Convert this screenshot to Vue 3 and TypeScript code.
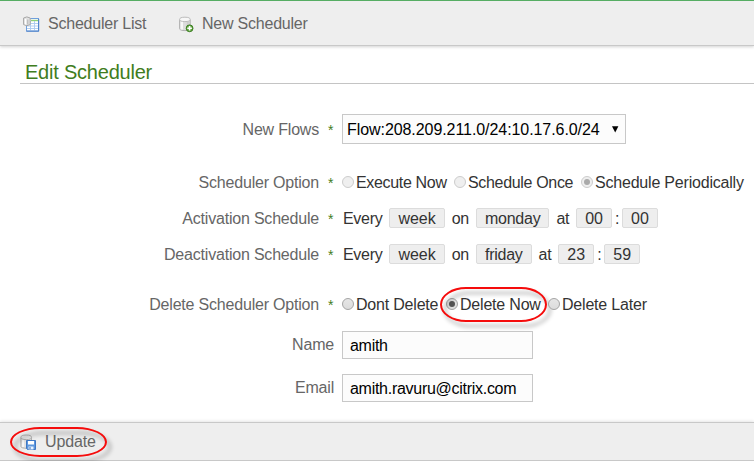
<script setup lang="ts">
import { ref } from 'vue'

interface Schedule {
  label: string
  period: string
  day: string
  hour: string
  minute: string
}

const scheduleOptions = ['Execute Now', 'Schedule Once', 'Schedule Periodically']
const deleteOptions = ['Dont Delete', 'Delete Now', 'Delete Later']
const scheduleChoice = 'Schedule Periodically'
const deleteChoice = ref('Delete Now')
const name = ref('amith')
const email = ref('amith.ravuru@citrix.com')

const schedules: Schedule[] = [
  { label: 'Activation Schedule', period: 'week', day: 'monday', hour: '00', minute: '00' },
  { label: 'Deactivation Schedule', period: 'week', day: 'friday', hour: '23', minute: '59' },
]
</script>

<template>
  <div class="page">
    <header class="toolbar">
      <a class="tool tool-list">
        <svg class="icon" width="17" height="17" viewBox="0 0 17 17">
          <rect x="3.5" y="2.5" width="12" height="12.5" fill="#fff" stroke="#6f9fdd" />
          <path d="M8 4.5h7" stroke="#8ed077" stroke-width="1.4" />
          <path d="M4 7.5h11M4 10h11M4 12.5h11M7.5 5v10M11.5 5v10" stroke="#a9caf0" stroke-width=".9" />
          <path d="M3.5 15.2h12.2V3" fill="none" stroke="#4b7fc9" />
          <path d="M.6 2Q3.8-.2 7.2 2V8.6Q3.8 10.8.6 8.6Z" fill="#e3e3e3" stroke="#a6a6a6" />
          <path d="M2.5 3v5.5" stroke="#fff" stroke-width="1.4" />
          <path d="M4.8 3.5v5" stroke="#b0b0b0" />
        </svg>
        <span>Scheduler List</span>
      </a>
      <a class="tool">
        <svg class="icon" width="16" height="17" viewBox="0 0 16 17">
          <path d="M.6 3.6v9.2c0 2.4 10.6 2.4 10.6 0V3.6" fill="#dcdcdc" stroke="#b0b0b0" />
          <path d="M2.8 5v8.5" stroke="#f8f8f8" stroke-width="2.4" />
          <path d="M8.8 5v8" stroke="#cdcdcd" stroke-width="2" />
          <ellipse cx="5.9" cy="3.4" rx="5.3" ry="2.2" fill="#f7f7f7" stroke="#bcbcbc" />
          <circle cx="10.6" cy="12.3" r="3.4" fill="#5da63a" stroke="#3d7d24" />
          <path d="M10.6 10v4.6M8.3 12.3h4.6" stroke="#fff" stroke-width="1.6" />
        </svg>
        <span>New Scheduler</span>
      </a>
    </header>

    <main class="content">
      <h1 class="title">Edit Scheduler</h1>
      <form class="form" @submit.prevent>
        <div class="row row-flow">
          <label class="label">New Flows<b class="star">*</b></label>
          <div class="select">
            <span>Flow:208.209.211.0/24:10.17.6.0/24</span>
            <svg width="7" height="7" viewBox="0 0 7 7"><path d="M0 .3h6.4L3.2 6.5Z" fill="#000" /></svg>
          </div>
        </div>

        <div class="row">
          <label class="label">Scheduler Option<b class="star">*</b></label>
          <div class="radios radios-schedule">
            <span v-for="option in scheduleOptions" :key="option" class="choice">
              <i class="radio disabled" :class="{ checked: option === scheduleChoice }"></i>{{ option }}
            </span>
          </div>
        </div>

        <div v-for="item in schedules" :key="item.label" class="row">
          <label class="label">{{ item.label }}<b class="star">*</b></label>
          <div class="schedule">
            <span class="word">Every</span>
            <span class="chip">{{ item.period }}</span>
            <span class="word">on</span>
            <span class="chip chip-day">{{ item.day }}</span>
            <span class="word">at</span>
            <span class="time">
              <span class="chip">{{ item.hour }}</span>
              <span class="word">:</span>
              <span class="chip">{{ item.minute }}</span>
            </span>
          </div>
        </div>

        <div class="row row-delete">
          <label class="label">Delete Scheduler Option<b class="star">*</b></label>
          <div class="radios radios-delete">
            <span v-for="option in deleteOptions" :key="option" class="choice" @click="deleteChoice = option">
              <i class="radio" :class="{ checked: option === deleteChoice }"></i>{{ option }}
              <i v-if="option === 'Delete Now'" class="ring ring-delete"></i>
            </span>
          </div>
        </div>

        <div class="row row-name">
          <label class="label">Name</label>
          <input v-model="name" class="input" type="text" />
        </div>
        <div class="row row-email">
          <label class="label">Email</label>
          <input v-model="email" class="input" type="text" />
        </div>
      </form>
    </main>

    <footer class="footer">
      <a class="update">
        <svg class="icon" width="17" height="17" viewBox="0 0 17 17">
          <path d="M.9 3.6v9c0 2.2 10.6 2.2 10.6 0v-9" fill="#e2e2e2" stroke="#b0b0b0" />
          <path d="M3 5v8" stroke="#f6f6f6" stroke-width="2" />
          <ellipse cx="6.2" cy="3.3" rx="5.3" ry="2.3" fill="#e9e9e9" stroke="#b0b0b0" />
          <path d="M6.5 6.5h9v9h-8l-1-1Z" fill="#5d97de" stroke="#3f78c4" />
          <path d="M8 7h6v3.5H8Z" fill="#fff" />
          <path d="M8.5 12.5h5v3h-5Z" fill="#e9f3ff" />
          <path d="M10 13v2.2" stroke="#346fbd" />
        </svg>
        <span>Update</span>
        <i class="ring ring-update"></i>
      </a>
    </footer>
  </div>
</template>

<style>
body {
  margin: 0;
  background: #fff;
}
</style>

<style scoped>
.page {
  box-sizing: border-box;
  display: flex;
  flex-direction: column;
  width: 754px;
  height: 461px;
  overflow: hidden;
  font: 16px/20px "Liberation Sans", Arial, sans-serif;
  color: #333;
  white-space: nowrap;
}

.toolbar {
  box-sizing: border-box;
  display: flex;
  flex: none;
  height: 46px;
  padding: 13px 0 0 23px;
  border-top: 1px solid #55ad63;
  border-bottom: 1px solid #c8c8c8;
  background: #eee;
  box-shadow: 0 1px 3px rgba(0, 0, 0, 0.18);
}

.tool,
.update {
  position: relative;
  display: flex;
  height: 20px;
  color: #666;
}

.tool {
  gap: 7px;
  letter-spacing: -0.22px;
}

.tool-list {
  width: 156px;
  gap: 8px;
}

.icon {
  flex: none;
  margin-top: 2px;
}

.content {
  flex: 1;
  min-height: 0;
}

.title {
  box-sizing: border-box;
  height: 24px;
  margin: 14px 0 0 20px;
  padding-left: 5px;
  border-bottom: 1px solid #c4c4c4;
  font-size: 20px;
  line-height: 24px;
  font-weight: normal;
  letter-spacing: -0.22px;
  color: #3f7d20;
}

.row {
  display: flex;
  align-items: center;
  height: 36px;
}

.row-flow {
  margin: 27px 0 17px;
}

.row-delete {
  margin-top: 14px;
}

.row-name {
  height: 46px;
}

.row-email {
  height: 40px;
}

.label {
  box-sizing: border-box;
  display: flex;
  justify-content: flex-end;
  flex: none;
  width: 334px;
  margin-right: 8px;
  padding-top: 2px;
  letter-spacing: -0.2px;
  color: #666;
}

.row-name .label,
.row-email .label {
  padding-top: 0;
}

.star {
  width: 6px;
  margin-left: 9px;
  font-size: 14px;
  font-weight: normal;
  color: #3f7d20;
}

.select {
  box-sizing: border-box;
  display: flex;
  align-items: center;
  justify-content: space-between;
  width: 284px;
  height: 30px;
  padding: 1px 6px 0 4px;
  border: 1px solid #c8c8c8;
  background: #fcfcfc;
  letter-spacing: -0.07px;
  color: #000;
}

.radios {
  display: grid;
  padding-top: 2px;
}

.radios-schedule {
  grid-template-columns: 112px 127px auto;
  letter-spacing: -0.33px;
}

.radios-schedule .choice:last-child {
  letter-spacing: -0.2px;
}

.radios-delete {
  grid-template-columns: 104px 102px auto;
  letter-spacing: -0.2px;
}

.choice {
  position: relative;
  display: flex;
  align-items: center;
}

.radio {
  box-sizing: border-box;
  position: relative;
  top: -1px;
  display: flex;
  flex: none;
  align-items: center;
  justify-content: center;
  width: 12px;
  height: 12px;
  margin-right: 2px;
  border: 1px solid #a4a4a4;
  border-radius: 50%;
  background: linear-gradient(#e6e6e6, #dcdcdc);
}

.radio.checked::after {
  content: "";
  width: 6px;
  height: 6px;
  border-radius: 50%;
  background: #555;
}

.radio.disabled {
  border-color: #ccc;
  background: #efefef;
}

.radio.disabled.checked::after {
  background: #aaa;
}

.schedule {
  display: flex;
  align-items: center;
  gap: 7px;
  padding-left: 1px;
}

.word {
  padding-top: 2px;
  line-height: 18px;
  letter-spacing: -0.3px;
}

.chip {
  box-sizing: border-box;
  height: 20px;
  padding: 0 8px;
  border: 1px solid #dcdcdc;
  border-radius: 2px;
  background: #eee;
  line-height: 19px;
}

.chip-day {
  letter-spacing: -0.25px;
}

.time {
  display: flex;
  gap: 3px;
}

.input {
  box-sizing: border-box;
  width: 191px;
  height: 28px;
  padding: 1px 7px 0;
  border: 1px solid #c8c8c8;
  border-radius: 0;
  outline: none;
  background: #fcfcfc;
  font: inherit;
  letter-spacing: -0.28px;
  color: #000;
}

.footer {
  box-sizing: border-box;
  flex: none;
  height: 39px;
  padding: 9px 0 0 20px;
  border-top: 1px solid #c8c8c8;
  border-bottom: 1px solid #c8c8c8;
  background: #eee;
  box-shadow: 0 -1px 3px rgba(0, 0, 0, 0.1);
}

.update {
  width: 80px;
  gap: 8px;
}

.update span {
  letter-spacing: -0.15px;
}

/* Red callout ring laid over a control */
.ring {
  box-sizing: border-box;
  position: absolute;
  border: 2px solid #f50c0c;
  pointer-events: none;
  filter: drop-shadow(4px 5px 2px rgba(0, 0, 0, 0.35));
}

.ring-delete {
  left: -6px;
  top: -8px;
  width: 107px;
  height: 35px;
  border-radius: 26px / 17.5px;
}

.ring-update {
  left: -10px;
  top: -5px;
  width: 97px;
  height: 30px;
  border-radius: 30px / 15px;
}
</style>
